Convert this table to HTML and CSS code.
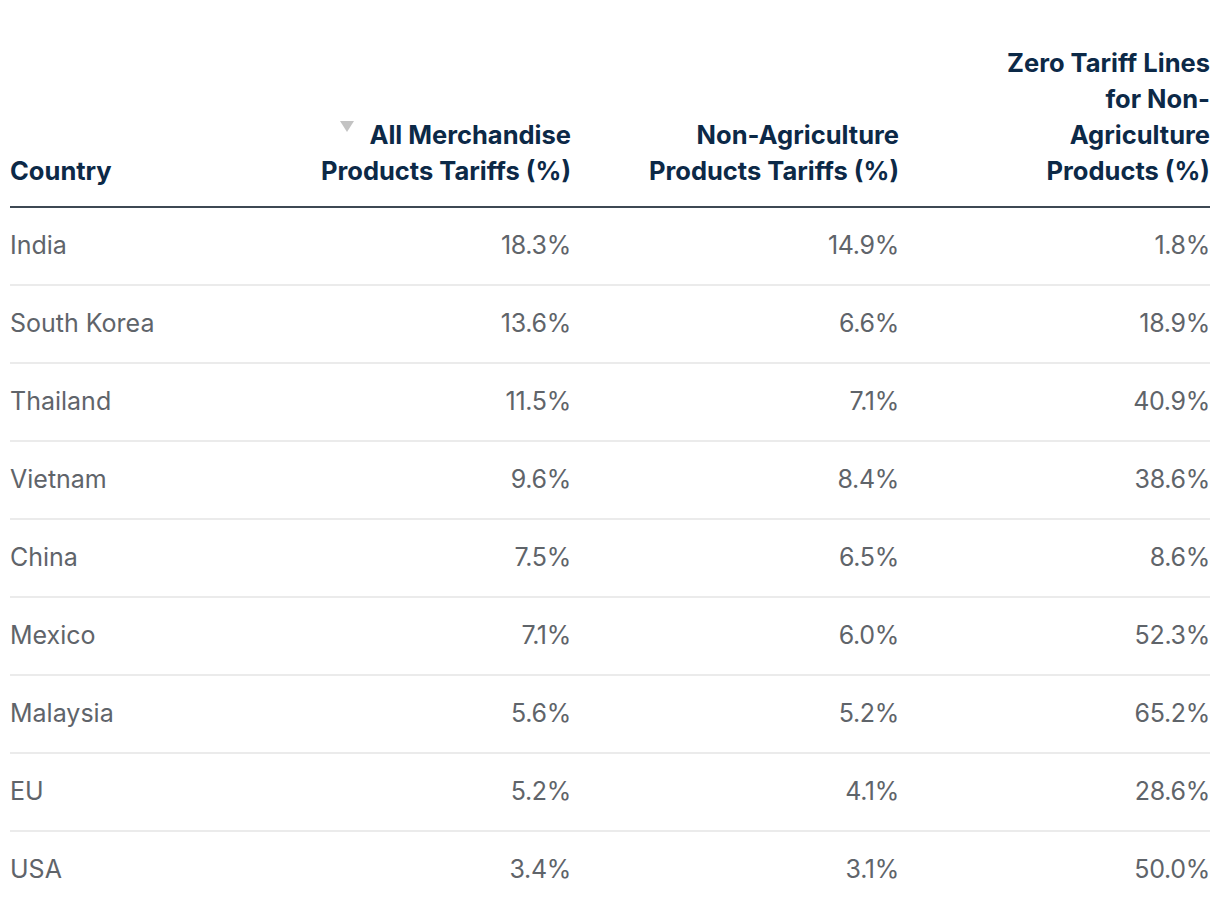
FILE: index.html
```html
<!DOCTYPE html>
<html lang="en">
<head>
<meta charset="utf-8">
<title>Tariffs</title>
<link rel="stylesheet" href="styles.css">
</head>
<body>
<div class="wrap">
<table class="tariffs">
  <colgroup>
    <col class="c1"><col class="c2"><col class="c3"><col class="c4">
  </colgroup>
  <thead>
    <tr>
      <th class="txt">Country</th>
      <th class="num"><span class="sort-icon"></span>All Merchandise<br>Products Tariffs (%)</th>
      <th class="num">Non-Agriculture<br>Products Tariffs (%)</th>
      <th class="num">Zero Tariff Lines<br>for Non-<br>Agriculture<br>Products (%)</th>
    </tr>
  </thead>
  <tbody>
    <tr><td class="txt">India</td><td class="num">18.3%</td><td class="num">14.9%</td><td class="num">1.8%</td></tr>
    <tr><td class="txt">South Korea</td><td class="num">13.6%</td><td class="num">6.6%</td><td class="num">18.9%</td></tr>
    <tr><td class="txt">Thailand</td><td class="num">11.5%</td><td class="num">7.1%</td><td class="num">40.9%</td></tr>
    <tr><td class="txt">Vietnam</td><td class="num">9.6%</td><td class="num">8.4%</td><td class="num">38.6%</td></tr>
    <tr><td class="txt">China</td><td class="num">7.5%</td><td class="num">6.5%</td><td class="num">8.6%</td></tr>
    <tr><td class="txt">Mexico</td><td class="num">7.1%</td><td class="num">6.0%</td><td class="num">52.3%</td></tr>
    <tr><td class="txt">Malaysia</td><td class="num">5.6%</td><td class="num">5.2%</td><td class="num">65.2%</td></tr>
    <tr><td class="txt">EU</td><td class="num">5.2%</td><td class="num">4.1%</td><td class="num">28.6%</td></tr>
    <tr><td class="txt">USA</td><td class="num">3.4%</td><td class="num">3.1%</td><td class="num">50.0%</td></tr>
  </tbody>
</table>
</div>
</body>
</html>
```

FILE: styles.css
```css
html, body {
  margin: 0;
  padding: 0;
  background: #ffffff;
}

.wrap {
  padding: 45px 10px 0 10px;
}

.tariffs {
  width: 1200px;
  border-collapse: collapse;
  table-layout: fixed;
  font-family: Inter, "Liberation Sans", sans-serif;
  font-size: 25px;
  line-height: 36px;
}

.c1 { width: 233px; }
.c2 { width: 328px; }
.c3 { width: 328px; }
.c4 { width: 311px; }

.tariffs th {
  color: #0c2947;
  font-size: 25.5px;
  font-weight: 700;
  vertical-align: bottom;
  padding: 0 0 17px 0;
  border-bottom: 2px solid #3e4853;
}

.tariffs td {
  color: #5f646a;
  font-weight: 400;
  padding: 19px 0 21px 0;
  border-bottom: 2px solid #ebebeb;
}

.tariffs td.num {
  letter-spacing: -0.3px;
}

.tariffs tbody tr:last-child td {
  border-bottom: none;
}

.txt { text-align: left; }
.num { text-align: right; }

.sort-icon {
  display: inline-block;
  width: 0;
  height: 0;
  border-left: 7px solid transparent;
  border-right: 7px solid transparent;
  border-top: 11px solid #c3c3c3;
  margin-right: 15px;
  vertical-align: 12px;
}
```
